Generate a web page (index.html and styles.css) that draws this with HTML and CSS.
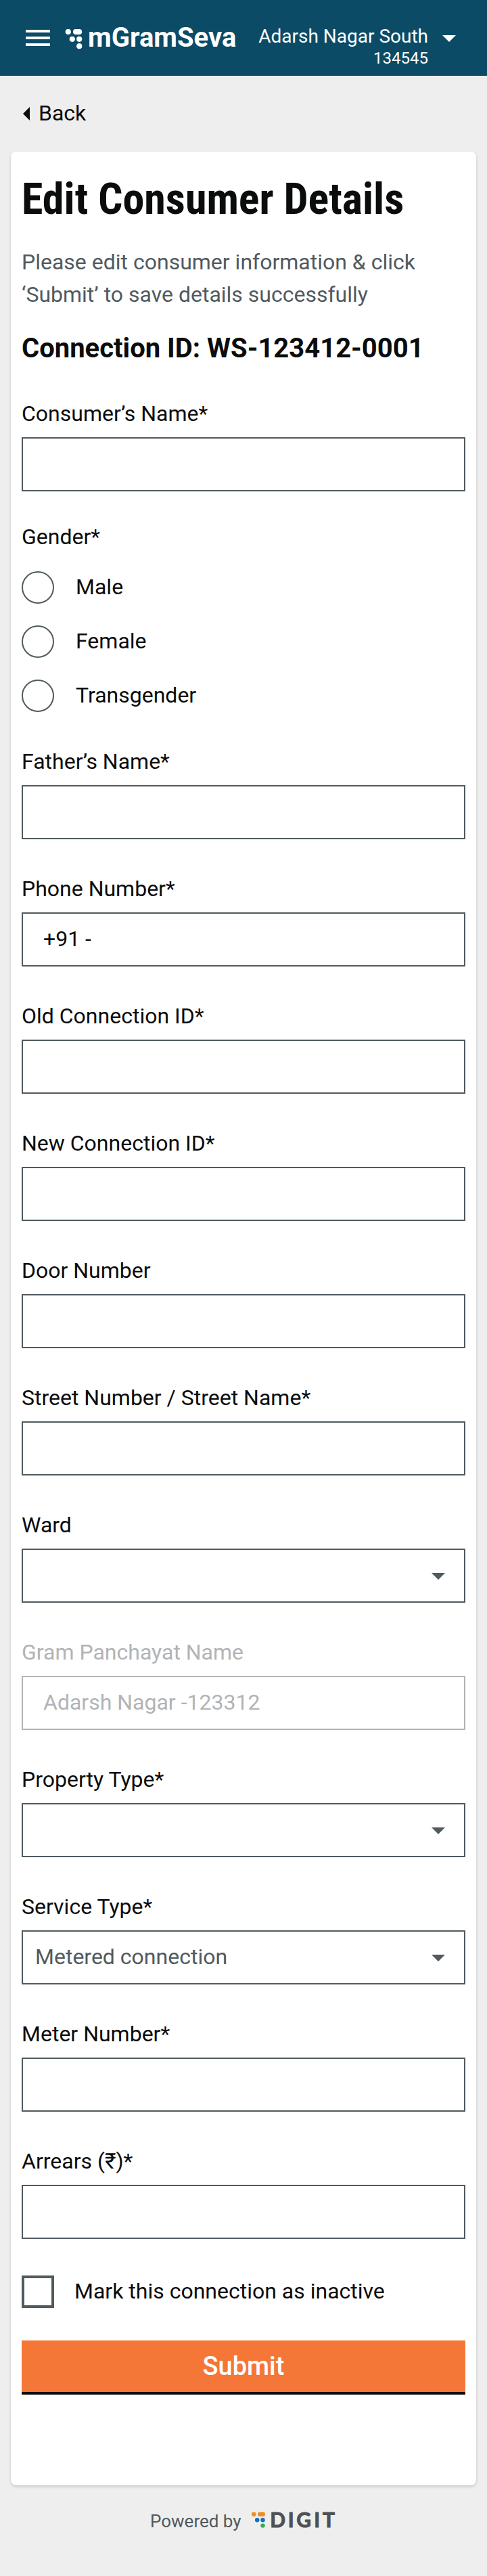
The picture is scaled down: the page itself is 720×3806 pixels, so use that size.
FILE: index.html
```html
<!DOCTYPE html>
<html lang="en">
<head>
<meta charset="utf-8">
<title>mGramSeva - Edit Consumer Details</title>
<link rel="stylesheet" href="styles.css">
</head>
<body>
<header class="topbar">
  <svg class="menu" width="36" height="24" viewBox="0 0 36 24"><path fill="#fff" d="M0 0h36v4H0zM0 10h36v4H0zM0 20h36v4H0z"/></svg>
  <svg class="mark" width="26" height="30" viewBox="0 0 26 30" fill="#fff"><circle cx="4.8" cy="4" r="4.1"/><rect x="12" y="0" width="13.2" height="8" rx="4"/><circle cx="10.8" cy="14.8" r="4.1"/><circle cx="21.2" cy="14.8" r="4.1"/><circle cx="21.2" cy="25.2" r="4.1"/></svg>
  <span class="brand">mGramSeva</span>
  <div class="tenant"><span class="tenant-name">Adarsh Nagar South</span><span class="tenant-code">134545</span></div>
  <svg class="tenant-caret" width="20" height="10" viewBox="0 0 20 10"><path fill="#fff" d="M0 0h20L10 10z"/></svg>
</header>
<nav class="back">
  <svg width="10" height="20" viewBox="0 0 10 20"><path fill="#0b0c0c" d="M10 0v20L0 10z"/></svg>
  <span>Back</span>
</nav>
<main class="card">
  <h1 class="title">Edit Consumer Details</h1>
  <p class="intro">Please edit consumer information &amp; click<br>‘Submit’ to save details successfully</p>
  <h2 class="connection">Connection ID: WS-123412-0001</h2>
  <form class="form">
    <div class="field first"><div class="label">Consumer’s Name*</div><div class="box"></div></div>
    <div class="field gender"><div class="label">Gender*</div>
      <div class="options">
        <div class="option"><i class="radio"></i><span>Male</span></div>
        <div class="option"><i class="radio"></i><span>Female</span></div>
        <div class="option"><i class="radio"></i><span>Transgender</span></div>
      </div>
    </div>
    <div class="field"><div class="label">Father’s Name*</div><div class="box"></div></div>
    <div class="field"><div class="label">Phone Number*</div><div class="box"><span>+91 -</span></div></div>
    <div class="field"><div class="label">Old Connection ID*</div><div class="box"></div></div>
    <div class="field"><div class="label">New Connection ID*</div><div class="box"></div></div>
    <div class="field"><div class="label">Door Number</div><div class="box"></div></div>
    <div class="field"><div class="label">Street Number / Street Name*</div><div class="box"></div></div>
    <div class="field"><div class="label">Ward</div><div class="box select"><span></span><i class="caret"></i></div></div>
    <div class="field disabled"><div class="label">Gram Panchayat Name</div><div class="box"><span>Adarsh Nagar -123312</span></div></div>
    <div class="field"><div class="label">Property Type*</div><div class="box select"><span></span><i class="caret"></i></div></div>
    <div class="field"><div class="label">Service Type*</div><div class="box select"><span>Metered connection</span><i class="caret"></i></div></div>
    <div class="field"><div class="label">Meter Number*</div><div class="box"></div></div>
    <div class="field"><div class="label">Arrears (₹)*</div><div class="box"></div></div>
    <div class="option inactive"><i class="checkbox"></i><span>Mark this connection as inactive</span></div>
    <div class="submit">Submit</div>
  </form>
</main>
<footer class="footer">
  <span class="powered">Powered by</span>
  <svg class="digit" width="130" height="46" viewBox="0 -8 130 46">
    <g fill="#f58b1f"><circle cx="4.2" cy="6.7" r="3.2"/><rect x="10" y="3.5" width="11" height="6.4" rx="3.2"/></g>
    <g fill="#0c74bb"><circle cx="9.2" cy="15.3" r="3.2"/><circle cx="17.5" cy="15.3" r="3.2"/></g>
    <circle cx="17.5" cy="23.6" r="3.2" fill="#34b04a"/>
    <text class="digit-text" x="28.2 54.8 67.2 93.2 106" y="25.8">DIGIT</text>
  </svg>
</footer>
</body>
</html>
```
FILE: styles.css
```css
* { box-sizing: border-box; }
body {
  margin: 0;
  min-height: 3806px;
  background: #eeeeee;
  color: #0b0c0c;
  font-family: Roboto, "Noto Sans", sans-serif;
  font-size: 32px;
  line-height: 38px;
}
.topbar {
  display: flex;
  align-items: flex-start;
  height: 112px;
  padding: 0 46px 0 38px;
  background: #0b4b66;
  color: #fff;
}
.menu { margin-top: 44px; }
.mark { margin: 43px 0 0 22px; }
.brand { margin: 33px 0 0 8px; font-size: 40px; font-weight: 700; line-height: 46px; }
.tenant { display: flex; flex-direction: column; align-items: flex-end; margin: 37px 0 0 auto; white-space: nowrap; }
.tenant-name { font-size: 28px; line-height: 34px; }
.tenant-code { margin-top: 1px; font-size: 24px; line-height: 28px; }
.tenant-caret { margin: 52px 0 0 21px; }
.back { display: flex; align-items: center; gap: 13px; height: 112px; padding-left: 34px; }
.back span { margin-bottom: 2px; }
.card {
  height: 3448px;
  margin: 0 16px;
  padding: 33px 16px;
  background: #fff;
  border-radius: 8px;
  box-shadow: 0 2px 4px rgba(0, 0, 0, .16);
}
.title {
  margin: 0;
  font-family: "Roboto Condensed", Roboto, sans-serif;
  font-size: 64px;
  font-stretch: condensed;
  font-weight: 700;
  line-height: 76px;
  white-space: nowrap;
}
.intro { margin: 30px 0 0; color: #505a5f; line-height: 48px; }
.connection { margin: 32px 0 0; font-size: 40px; font-weight: 700; line-height: 48px; }
.form { display: flex; flex-direction: column; margin-top: 53px; }
.field { display: flex; flex-direction: column; gap: 16px; margin-bottom: 54px; }
.first { margin-bottom: 48px; }
.gender { gap: 32px; }
.options { display: flex; flex-direction: column; gap: 32px; }
.option { display: flex; align-items: center; gap: 32px; }
.option span { margin-bottom: 2px; }
.radio { width: 48px; height: 48px; border: 2px solid #505a5f; border-radius: 50%; }
.box {
  display: flex;
  align-items: center;
  height: 80px;
  padding: 0 30px 2px;
  border: 2px solid #505a5f;
}
.select { justify-content: space-between; padding: 0 28px 2px 18px; color: #505a5f; }
.caret { border: 10px solid transparent; border-top-color: #505a5f; border-bottom: 0; margin-top: 3px; }
.disabled { color: #b1b4b6; }
.disabled .box { border-color: #b1b4b6; }
.inactive { gap: 30px; }
.checkbox { width: 48px; height: 48px; border: 4px solid #505a5f; }
.submit {
  height: 80px;
  margin-top: 48px;
  background: #f47738;
  border-bottom: 4px solid #0b0c0c;
  color: #fff;
  font-size: 38px;
  font-weight: 500;
  line-height: 76px;
  text-align: center;
}
.footer { display: flex; align-items: flex-start; gap: 14px; padding: 28px 0 0 222px; }
.powered { margin-top: 8px; color: #505a5f; font-size: 26px; line-height: 34px; white-space: nowrap; }
.digit-text {
  font-family: Lato, sans-serif;
  font-size: 30px;
  font-weight: 700;
  fill: #4f5052;
  stroke: #4f5052;
  stroke-width: 1px;
  stroke-linejoin: round;
}
```
